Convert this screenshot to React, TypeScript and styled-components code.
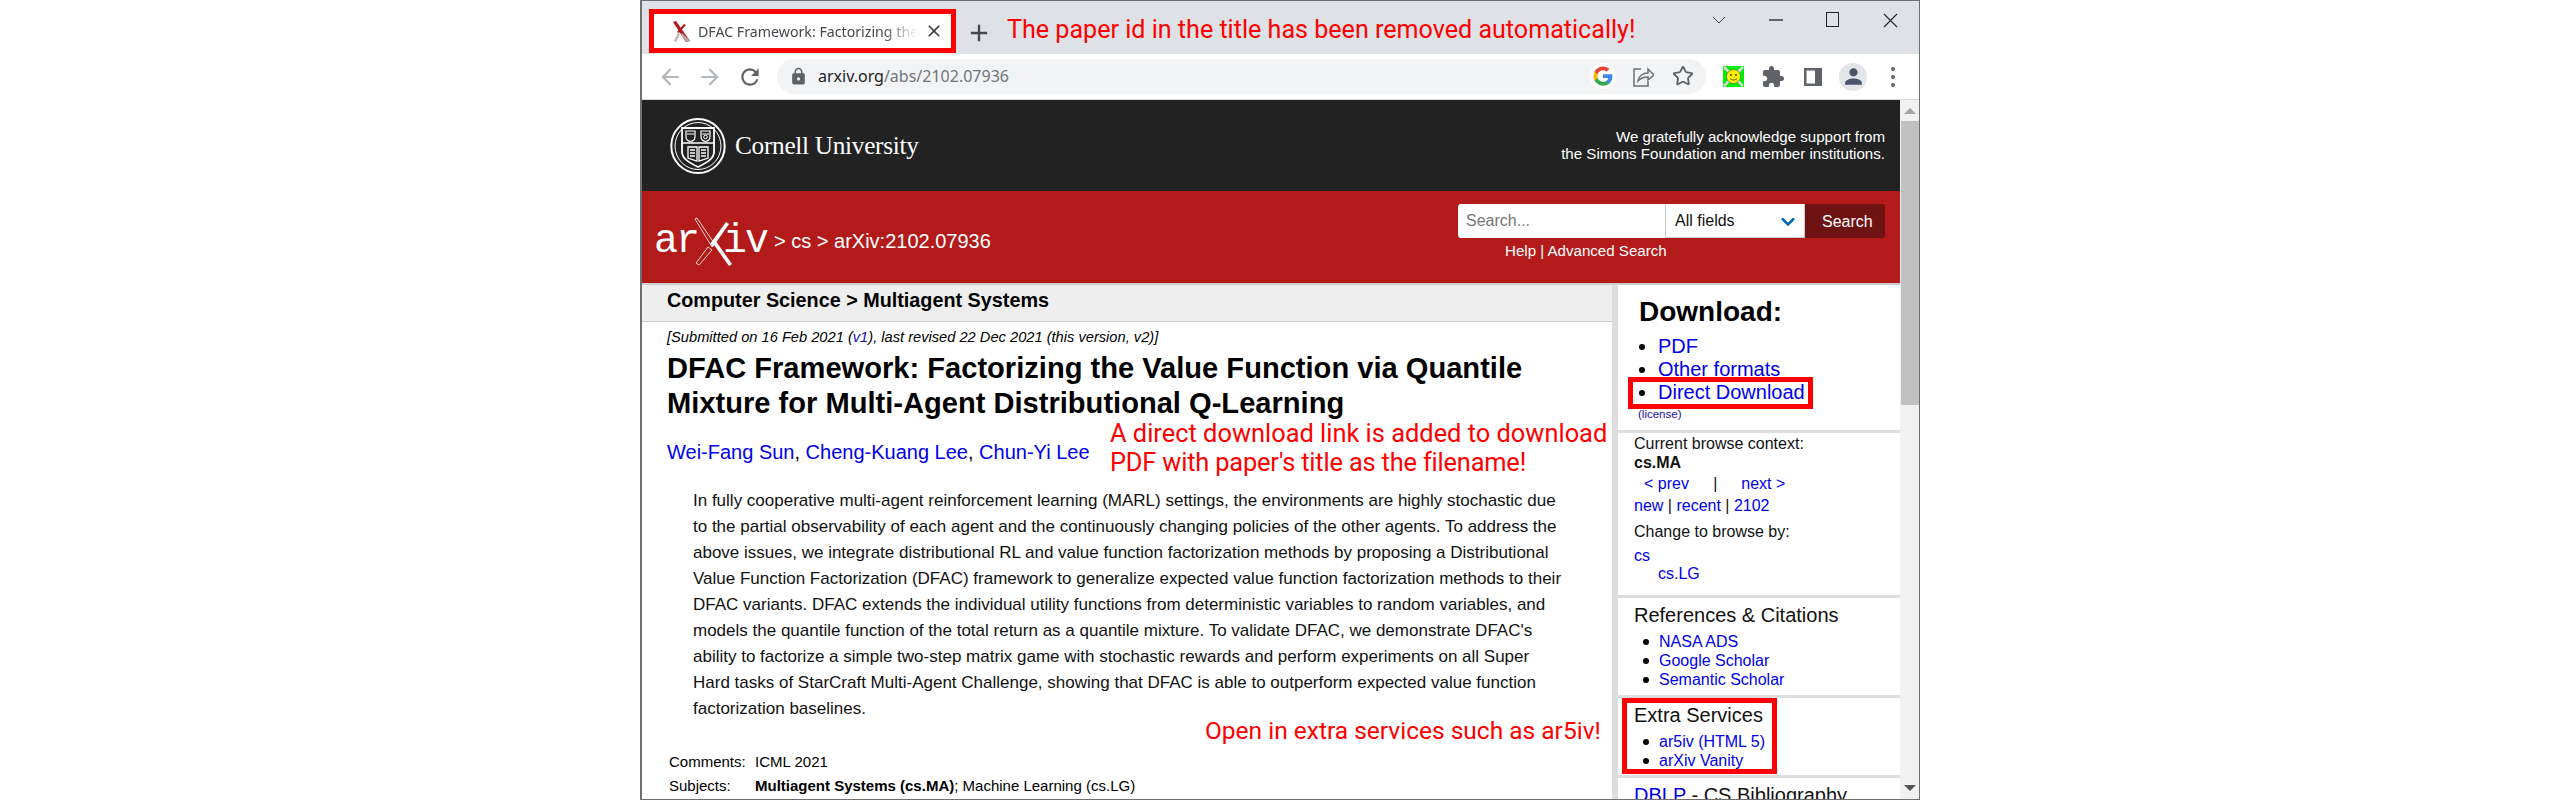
import React from "react";
import styled, { createGlobalStyle } from "styled-components";
import { MdRefresh, MdExtension, MdLock, MdArrowBack, MdArrowForward, MdAdd, MdClose, MdPerson } from "react-icons/md";
import { Star } from "lucide-react";

const Global = createGlobalStyle`
  html, body { margin: 0; padding: 0; background: #fff; }
  * { box-sizing: border-box; }
  a { color: #1a0dab; text-decoration: none; }
`;

const Stage = styled.div`
  display: flex;
  justify-content: center;
  width: 2560px;
  height: 800px;
  overflow: hidden;
`;
const Win = styled.div`
  position: relative;
  width: 1280px;
  height: 800px;
  display: flex;
  flex-direction: column;
  border: 1px solid #6f6f6f;
  border-width: 1px 1px 1px 2px;
  background: #fff;
  overflow: hidden;
`;
const TabStrip = styled.div`
  height: 53px;
  flex: none;
  background: #dee1e6;
  display: flex;
  align-items: flex-start;
  padding-left: 7px;
`;
const Tab = styled.div`
  width: 307px;
  height: 44px;
  margin-top: 8px;
  border: 5px solid #ff0000;
  background: #fff;
  display: flex;
  align-items: center;
  padding-left: 17px;
  padding-right: 9px;
  position: relative;
`;
const Fav = styled.svg`
  width: 20px;
  height: 24px;
  flex: none;
`;
const TabTitle = styled.div`
  margin-left: 7px;
  flex: 1;
  font: 14.2px "Noto Sans", sans-serif;
  color: #45494e;
  white-space: nowrap;
  -webkit-mask-image: linear-gradient(90deg, #000 84%, transparent 100%);
  mask-image: linear-gradient(90deg, #000 84%, transparent 100%);
`;
const TabClose = styled.div`
  color: #3c4043;
  display: flex;
  font-size: 20px;
  margin-left: 6px;
`;
const NewTab = styled.div`
  color: #45494e;
  font-size: 28px;
  display: flex;
  margin: 18px 0 0 9px;
`;
const WinControls = styled.div`
  margin-left: auto;
  display: flex;
  height: 38px;
  color: #333;
`;
const WinBtn = styled.div<{ $w: number }>`
  width: ${(p) => p.$w}px;
  display: flex;
  align-items: center;
  justify-content: center;
`;
const Toolbar = styled.div`
  height: 46px;
  flex: none;
  display: flex;
  align-items: center;
  padding: 0 0 0 8px;
  background: #fff;
  border-bottom: 1px solid #d6d6d6;
`;
const NavBtn = styled.div<{ $off?: boolean }>`
  width: 40px;
  display: flex;
  justify-content: center;
  font-size: 26px;
  color: ${(p) => (p.$off ? "#b4b7ba" : "#5f6368")};
`;
const Omni = styled.div`
  margin-left: 7px;
  width: 929px;
  height: 35px;
  margin-top: -1px;
  border-radius: 18px;
  background: #f1f3f4;
  display: flex;
  align-items: center;
  padding: 0 3px 0 12px;
`;
const LockIcon = styled.div`
  color: #5f6368;
  font-size: 19px;
  display: flex;
`;
const Url = styled.div`
  margin-left: 10px;
  flex: 1;
  font: 16px "Noto Sans", sans-serif;
  color: #70757a;
  b { font-weight: 400; color: #202124; }
`;
const ToolIcon = styled.div`
  width: 40px;
  display: flex;
  justify-content: center;
  align-items: center;
  color: #5f6368;
`;
const Exts = styled.div`
  margin-left: 7px;
  display: flex;
  align-items: center;
`;
const Avatar = styled.div`
  width: 28px;
  height: 28px;
  border-radius: 50%;
  background: #e3e5e9;
  color: #4a5468;
  font-size: 25px;
  display: flex;
  align-items: center;
  justify-content: center;
`;
const Dots = styled.div`
  display: flex;
  flex-direction: column;
  gap: 4px;
  i { width: 4px; height: 4px; border-radius: 50%; background: #5f6368; display: block; }
`;
const PageRow = styled.div`
  flex: 1;
  min-height: 0;
  display: flex;
  font-family: "Liberation Sans", Arial, sans-serif;
`;
const Page = styled.div`
  flex: 1;
  min-width: 0;
  display: flex;
  flex-direction: column;
`;
const Scroll = styled.div`
  width: 19px;
  flex: none;
  background: #f1f1f1;
  display: flex;
  flex-direction: column;
  align-items: center;
`;
const Arrow = styled.div<{ $down?: boolean }>`
  width: 0;
  height: 0;
  border-left: 6px solid transparent;
  border-right: 6px solid transparent;
  ${(p) => (p.$down ? "border-top: 6px solid #555;" : "border-bottom: 6px solid #a3a3a3;")}
  ${(p) => (p.$down ? "margin-top: auto; margin-bottom: 8px;" : "margin-top: 8px;")}
`;
const Thumb = styled.div`
  width: 18px;
  height: 284px;
  margin-top: 7px;
  background: #c1c1c1;
`;
const Cornell = styled.div`
  height: 91px;
  flex: none;
  background: #222;
  color: #fff;
  display: flex;
  align-items: center;
  justify-content: space-between;
  padding: 0 15px 0 28px;
`;
const CornellLogo = styled.div`
  display: flex;
  align-items: center;
  gap: 9px;
  font: 25.3px/1 "Liberation Serif", "Times New Roman", serif;
  letter-spacing: -0.3px;
`;
const Thanks = styled.div`
  text-align: right;
  font-size: 15.1px;
  line-height: 17px;
  margin-top: -1px;
`;
const RedBar = styled.div`
  height: 92px;
  flex: none;
  background: #b31b1b;
  color: #fff;
  display: flex;
  justify-content: space-between;
  padding: 0 15px 0 12px;
`;
const Crumb = styled.div`
  display: flex;
  align-items: center;
  height: 49px;
  margin-top: 26px;
  font-size: 20px;
  gap: 7px;
`;
const Logo = styled.div`
  display: flex;
  align-items: center;
  width: 113px;
  font: 40px/1 "Liberation Mono", monospace;
  letter-spacing: -2px;
  svg { flex: none; margin: 0 -11px 0 -4px; }
`;
const SearchCol = styled.div`
  width: 427px;
  margin-top: 13px;
  display: flex;
  flex-direction: column;
`;
const SearchRow = styled.div`
  height: 34px;
  display: flex;
  border-radius: 3px;
  overflow: hidden;
  font-size: 16px;
`;
const SearchInput = styled.div`
  width: 207px;
  background: #fff;
  color: #757575;
  padding: 0 0 0 8px;
  line-height: 33px;
`;
const SearchSelect = styled.div`
  width: 140px;
  background: #fff;
  border: 1px solid #ccc;
  border-width: 0 1px 1px 1px;
  color: #111;
  padding: 0 9px;
  display: flex;
  align-items: center;
  justify-content: space-between;
  svg { margin-top: 2px; }
`;
const SearchBtn = styled.div`
  flex: 1;
  background: #6e1212;
  padding-left: 17px;
  line-height: 36px;
`;
const SearchLinks = styled.div`
  margin: 4px 0 0 47px;
  font-size: 15.1px;
  line-height: 18px;
`;
const Main = styled.div`
  flex: 1;
  min-height: 0;
  display: grid;
  grid-template-columns: 970px 6px 1fr;
  border-top: 2px solid #ccc;
`;
const Gutter = styled.div`
  background: #ddd;
`;
const Left = styled.div`
  color: #000;
  min-width: 0;
`;
const Breadcrumb = styled.div`
  height: 37px;
  background: #eee;
  border-bottom: 1px solid #ccc;
  padding-left: 25px;
  font-size: 19.8px;
  font-weight: 700;
  line-height: 30px;
`;
const Body = styled.div`
  padding-left: 25px;
`;
const Dateline = styled.div`
  margin-top: 5px;
  font-size: 14.66px;
  font-style: italic;
  line-height: 20px;
`;
const Title = styled.h1`
  margin: 4px 0 0;
  font-size: 29.1px;
  line-height: 35px;
  font-weight: 700;
`;
const Authors = styled.div`
  margin-top: 19px;
  font-size: 20px;
  line-height: 24px;
  a { color: #0000ee; }
`;
const Abstract = styled.div`
  margin: 24px 0 0 26px;
  font-size: 17px;
  line-height: 26px;
  color: #111;
`;
const AbsLine = styled.span`
  display: block;
  white-space: nowrap;
`;
const Meta = styled.div`
  margin: 28px 0 0 2px;
  display: grid;
  grid-template-columns: 86px 1fr;
  font-size: 15px;
  line-height: 24px;
`;
const Side = styled.div`
  min-width: 0;
  display: flex;
  flex-direction: column;
  overflow: hidden;
  a { color: #0000ee; }
`;
const Sec = styled.div<{ $h: number }>`
  position: relative;
  height: ${(p) => p.$h}px;
  flex: none;
  padding-left: 16px;
  border-bottom: 3px solid #ddd;
`;
const DlHead = styled.h2`
  margin: 11px 0 0 5px;
  font-size: 28px;
  line-height: 32px;
`;
const DlList = styled.ul`
  list-style: none;
  margin: 7px 0 0 5px;
  padding: 0;
  font-size: 20px;
  line-height: 23px;
`;
const Item = styled.li<{ $gap: number }>`
  position: relative;
  padding-left: ${(p) => p.$gap}px;
  white-space: nowrap;
  &::before {
    content: "";
    position: absolute;
    left: 0;
    top: 50%;
    width: 6px;
    height: 6px;
    margin-top: -3px;
    border-radius: 50%;
    background: #000;
  }
`;
const Lic = styled.div`
  margin: 3px 0 0 4px;
  font-size: 11.5px;
  line-height: 14px;
  color: #1a0dab;
`;
const Line = styled.div<{ $top?: number; $left?: number; $bold?: boolean }>`
  margin-top: ${(p) => p.$top ?? 0}px;
  margin-left: ${(p) => p.$left ?? 0}px;
  font-size: 16px;
  line-height: 19px;
  font-weight: ${(p) => (p.$bold ? 700 : 400)};
  white-space: pre;
  color: #111;
`;
const Sep = styled.span`
  letter-spacing: -0.4px;
`;
const SecHead = styled.h3<{ $pad?: boolean }>`
  margin: 0;
  padding-top: 5px;
  padding-left: ${(p) => (p.$pad ? 16 : 0)}px;
  font-size: 20px;
  line-height: 24px;
  font-weight: 400;
  color: #111;
  white-space: nowrap;
  a { text-decoration: ${(p) => (p.$pad ? "underline" : "none")}; }
`;
const SubList = styled.ul`
  list-style: none;
  margin: 5px 0 0 9px;
  padding: 0;
  font-size: 16px;
  line-height: 19px;
`;
const DownloadFrame = styled.div`
  position: absolute;
  top: -4px;
  bottom: -5px;
  left: -11px;
  width: 185px;
  border: 5px solid #ff0000;
`;
const ExtraFrame = styled.div`
  position: absolute;
  top: 0;
  bottom: 1px;
  left: 4px;
  width: 155px;
  border: 5px solid #ff0000;
`;
const Note = styled.div<{ $x: number; $y: number; $size: number }>`
  position: absolute;
  left: ${(p) => p.$x}px;
  top: ${(p) => p.$y}px;
  font: ${(p) => p.$size}px/29px Roboto, sans-serif;
  color: #ff0000;
  white-space: nowrap;
`;
const NoteLine = styled.span`
  letter-spacing: -0.18px;
`;

const abstractLines = [
  "In fully cooperative multi-agent reinforcement learning (MARL) settings, the environments are highly stochastic due",
  "to the partial observability of each agent and the continuously changing policies of the other agents. To address the",
  "above issues, we integrate distributional RL and value function factorization methods by proposing a Distributional",
  "Value Function Factorization (DFAC) framework to generalize expected value function factorization methods to their",
  "DFAC variants. DFAC extends the individual utility functions from deterministic variables to random variables, and",
  "models the quantile function of the total return as a quantile mixture. To validate DFAC, we demonstrate DFAC's",
  "ability to factorize a simple two-step matrix game with stochastic rewards and perform experiments on all Super",
  "Hard tasks of StarCraft Multi-Agent Challenge, showing that DFAC is able to outperform expected value function",
  "factorization baselines.",
];

const GoogleG = () => (
  <svg width="26" height="26" viewBox="0 0 48 48">
    <circle cx="24" cy="24" r="24" fill="#fff" />
    <path fill="#4285F4" d="M41.3 24.4c0-1.3-.1-2.5-.3-3.6H24v7h9.7c-.4 2.2-1.7 4.1-3.5 5.4v4.5h5.7c3.4-3.1 5.4-7.7 5.4-13.3z" />
    <path fill="#34A853" d="M24 42c4.7 0 8.7-1.6 11.6-4.2l-5.7-4.4c-1.6 1.1-3.6 1.7-5.9 1.7-4.6 0-8.4-3.1-9.8-7.2h-5.9v4.6C11.3 38.2 17.2 42 24 42z" />
    <path fill="#FBBC05" d="M14.2 27.9c-.4-1.1-.6-2.2-.6-3.4s.2-2.3.6-3.4v-4.6H8.3C7.1 18.9 6.400 21.600 6.400 24.500s.7 5.600 1.900 8z" />
    <path fill="#EA4335" d="M24 13.400c2.600 0 4.900.9 6.700 2.600l5-5C32.700 8.200 28.700 6.500 24 6.500c-6.800 0-12.700 3.800-15.700 9.500l5.900 4.600c1.400-4.100 5.200-7.200 9.800-7.200z" />
  </svg>
);

const Seal = () => (
  <svg width="56" height="56" viewBox="0 0 56 56" fill="none" stroke="#fff">
    <ellipse cx="28" cy="28" rx="26.700" ry="27" strokeWidth="2" />
    <ellipse cx="28" cy="28" rx="23" ry="23.500" strokeWidth="1" />
    <path d="M12 10h32v24c0 7-8 11-16 15-8-4-16-8-16-15z" strokeWidth="1.800" />
    <path d="M12 25h32" strokeWidth="1.500" />
    <path d="M16 13h9v6c0 2-2 4-4.500 4.500C18 23 16 21 16 19z" strokeWidth="1.200" />
    <path d="M31 13h9v6c0 2-2 4-4.500 4.500C33 23 31 21 31 19z" strokeWidth="1.200" />
    <path d="M17 16h7M32 16h7" strokeWidth="1.200" />
    <circle cx="35.500" cy="19" r="1.800" strokeWidth="1" />
    <path d="M18 29h9v14l-9-3zM29 29h9v11l-9 3z" strokeWidth="1.300" />
    <path d="M20 32h5M20 35h5M20 38h5M31 32h5M31 35h5M31 38h5" strokeWidth="1.300" />
  </svg>
);

const ArxivX = () => (
  <svg width="40" height="50" viewBox="0 0 40 50">
    <path d="M1 2 L3 1 L20 26 L18 30 Z" fill="none" stroke="#fff" strokeWidth="0.800" />
    <path d="M18 25 L21 23 L38 47 L35 49 Z" fill="#fff" />
    <path d="M32 5 L35 7 L19 30 L16 27 Z" fill="#fff" />
    <path d="M14 30 L18 33 L5 48 L2 46 Z" fill="none" stroke="#fff" strokeWidth="0.800" />
  </svg>
);

export default function App() {
  return (
    <Stage>
      <Global />
      <Win>
        <TabStrip>
          <Tab>
            <Fav viewBox="0 0 20 24">
              <path d="M2 3 L5 2 L19 22 L15 23 Z" fill="#b31b1b" />
              <path d="M13 5 L15 6 L8 14 L6 13 Z" fill="#b31b1b" />
              <path d="M7 14 L9 15 L5 23 L3 22 Z" fill="#bdb5ad" />
              <path d="M11 14 L19 22 L16 23 L10 16 Z" fill="#b7afa8" />
            </Fav>
            <TabTitle>DFAC Framework: Factorizing the</TabTitle>
            <TabClose>
              <MdClose />
            </TabClose>
          </Tab>
          <NewTab>
            <MdAdd />
          </NewTab>
          <WinControls>
            <WinBtn $w={56}>
              <svg width="14" height="10" viewBox="0 0 14 10" fill="none" stroke="#444" strokeWidth="1">
                <path d="M1 2l6 6 6-6" />
              </svg>
            </WinBtn>
            <WinBtn $w={58}>
              <svg width="14" height="2" viewBox="0 0 14 2"><path d="M0 1h14" stroke="#222" strokeWidth="1.300" /></svg>
            </WinBtn>
            <WinBtn $w={56}>
              <svg width="14" height="16" viewBox="0 0 14 16" fill="none"><rect x="0.500" y="0.500" width="12" height="14" stroke="#222" /></svg>
            </WinBtn>
            <WinBtn $w={58}>
              <svg width="15" height="15" viewBox="0 0 15 15"><path d="M1 1l13 13M14 1L1 14" stroke="#222" strokeWidth="1.100" /></svg>
            </WinBtn>
          </WinControls>
        </TabStrip>
        <Toolbar>
          <NavBtn $off><MdArrowBack /></NavBtn>
          <NavBtn $off><MdArrowForward /></NavBtn>
          <NavBtn><MdRefresh /></NavBtn>
          <Omni>
            <LockIcon><MdLock /></LockIcon>
            <Url><b>arxiv.org</b>/abs/2102.07936</Url>
            <ToolIcon><GoogleG /></ToolIcon>
            <ToolIcon>
              <svg width="22" height="24" viewBox="0 0 22 24" fill="none" stroke="#6b6f74" strokeWidth="1.500">
                <path d="M9 5H2v17h14v-5" />
                <path d="M6 17c1-5 5-8 10-8V5l6 6-6 5v-3c-4 0-7 1-10 4z" />
              </svg>
            </ToolIcon>
            <ToolIcon><Star size={22} strokeWidth={2} color="#5f6368" /></ToolIcon>
          </Omni>
          <Exts>
            <ToolIcon>
              <svg width="21" height="21" viewBox="0 0 21 21">
                <rect width="21" height="21" fill="#00f000" />
                <path d="M1 1l19 19M20 1L1 20" stroke="#d8d8d8" strokeWidth="2.500" />
                <circle cx="10.500" cy="10.500" r="7" fill="#fff000" stroke="#555" strokeWidth="0.600" />
                <circle cx="8" cy="9" r="0.900" fill="#333" />
                <circle cx="13" cy="9" r="0.900" fill="#333" />
                <path d="M7 12.500c2 2 5 2 7 0" stroke="#333" strokeWidth="0.800" fill="none" />
              </svg>
            </ToolIcon>
            <ToolIcon><MdExtension size={24} /></ToolIcon>
            <ToolIcon>
              <svg width="18" height="18" viewBox="0 0 18 18">
                <path fillRule="evenodd" d="M0 0h18v18H0zM2.500 2.500v13H11v-13z" fill="#5f6368" />
                <rect x="11" y="2.500" width="4.500" height="13" fill="#5f6368" />
              </svg>
            </ToolIcon>
            <ToolIcon><Avatar><MdPerson /></Avatar></ToolIcon>
            <ToolIcon><Dots><i /><i /><i /></Dots></ToolIcon>
          </Exts>
        </Toolbar>
        <PageRow>
          <Page>
            <Cornell>
              <CornellLogo><Seal />Cornell University</CornellLogo>
              <Thanks>We gratefully acknowledge support from<br />the Simons Foundation and member institutions.</Thanks>
            </Cornell>
            <RedBar>
              <Crumb>
                <Logo>ar<ArxivX />iv</Logo>
                <span>&gt; cs &gt; arXiv:2102.07936</span>
              </Crumb>
              <SearchCol>
                <SearchRow>
                  <SearchInput>Search...</SearchInput>
                  <SearchSelect>
                    All fields
                    <svg width="14" height="9" viewBox="0 0 14 9" fill="none"><path d="M1 1.500l6 6 6-6" stroke="#0068ac" strokeWidth="2.500" /></svg>
                  </SearchSelect>
                  <SearchBtn>Search</SearchBtn>
                </SearchRow>
                <SearchLinks>Help | Advanced Search</SearchLinks>
              </SearchCol>
            </RedBar>
            <Main>
              <Left>
                <Breadcrumb>Computer Science &gt; Multiagent Systems</Breadcrumb>
                <Body>
                  <Dateline>[Submitted on 16 Feb 2021 (<a href="#v1">v1</a>), last revised 22 Dec 2021 (this version, v2)]</Dateline>
                  <Title>DFAC Framework: Factorizing the Value Function via Quantile<br />Mixture for Multi-Agent Distributional Q-Learning</Title>
                  <Authors><a href="#a">Wei-Fang Sun</a>, <a href="#b">Cheng-Kuang Lee</a>, <a href="#c">Chun-Yi Lee</a></Authors>
                  <Abstract>
                    {abstractLines.map((l) => <AbsLine key={l}>{l}</AbsLine>)}
                  </Abstract>
                  <Meta>
                    <span>Comments:</span><span>ICML 2021</span>
                    <span>Subjects:</span><span><b>Multiagent Systems (cs.MA)</b>; Machine Learning (cs.LG)</span>
                  </Meta>
                </Body>
              </Left>
              <Gutter />
              <Side>
                <Sec $h={148}>
                  <DlHead>Download:</DlHead>
                  <DlList>
                    <Item $gap={19}><a href="#p">PDF</a></Item>
                    <Item $gap={19}><a href="#o">Other formats</a></Item>
                    <Item $gap={19}><a href="#d">Direct Download</a><DownloadFrame /></Item>
                  </DlList>
                  <Lic>(license)</Lic>
                </Sec>
                <Sec $h={165}>
                  <Line $top={1}>Current browse context:</Line>
                  <Line $bold>cs.MA</Line>
                  <Line $top={2} $left={10}><a href="#pv">&lt; prev</a><Sep>{"      |      "}</Sep><a href="#nx">next &gt;</a></Line>
                  <Line $top={3}><a href="#n">new</a> | <a href="#r">recent</a> | <a href="#y">2102</a></Line>
                  <Line $top={7}>Change to browse by:</Line>
                  <Line $top={5}><a href="#cs">cs</a></Line>
                  <Line $top={-1} $left={24}><a href="#lg">cs.LG</a></Line>
                </Sec>
                <Sec $h={100}>
                  <SecHead>References &amp; Citations</SecHead>
                  <SubList>
                    <Item $gap={16}><a href="#ads">NASA ADS</a></Item>
                    <Item $gap={16}><a href="#gs">Google Scholar</a></Item>
                    <Item $gap={16}><a href="#ss">Semantic Scholar</a></Item>
                  </SubList>
                </Sec>
                <Sec $h={80}>
                  <SecHead>Extra Services</SecHead>
                  <SubList>
                    <Item $gap={16}><a href="#ar5">ar5iv (HTML 5)</a></Item>
                    <Item $gap={16}><a href="#van">arXiv Vanity</a></Item>
                  </SubList>
                  <ExtraFrame />
                </Sec>
                <SecHead $pad><a href="#dblp">DBLP</a> - CS Bibliography</SecHead>
              </Side>
            </Main>
          </Page>
          <Scroll>
            <Arrow />
            <Thumb />
            <Arrow $down />
          </Scroll>
        </PageRow>
        <Note $x={365} $y={14} $size={25.1}>The paper id in the title has been removed automatically!</Note>
        <Note $x={468} $y={418} $size={25.4}>A direct download link is added to download<br /><NoteLine>PDF with paper's title as the filename!</NoteLine></Note>
        <Note $x={563} $y={715} $size={24.5}>Open in extra services such as ar5iv!</Note>
      </Win>
    </Stage>
  );
}
